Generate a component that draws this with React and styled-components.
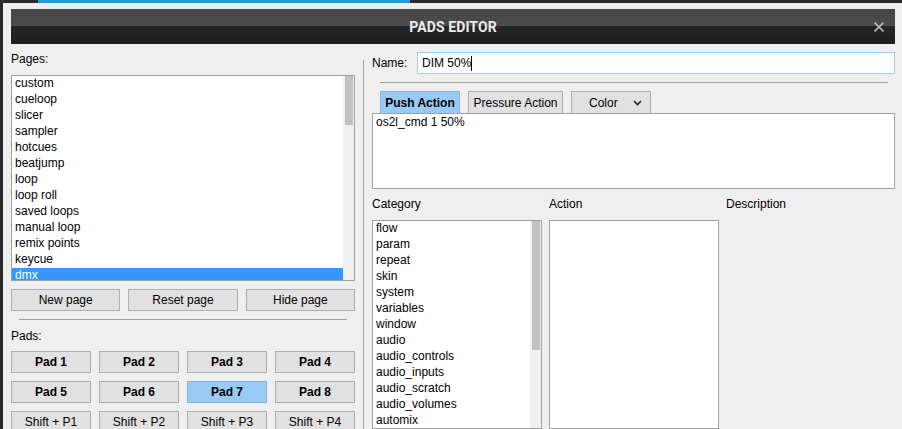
import styled, { createGlobalStyle } from 'styled-components';

const GlobalStyle = createGlobalStyle`
  html, body, #root {
    margin: 0;
    height: 100%;
  }
  body {
    background:
      linear-gradient(
          to right,
          transparent 38px,
          #1e9bd8 38px,
          #1e9bd8 410px,
          transparent 410px
        )
        top left / 100% 3px no-repeat,
      #2a2a2a;
    font-family: 'Liberation Sans', Arial, sans-serif;
    font-size: 12px;
    color: #000;
    overflow: hidden;
  }
  * {
    box-sizing: border-box;
  }
`;

const Page = styled.div`
  height: 100vh;
  padding: 3px 0 0 3px;
`;

const Dialog = styled.div`
  display: flex;
  flex-direction: column;
  height: 100%;
  padding: 6px 7px 0 8px;
  background: #efefef;
  overflow: hidden;
`;

const TitleBar = styled.div`
  display: grid;
  grid-template-columns: 1fr auto 1fr;
  align-items: center;
  height: 35px;
  flex-shrink: 0;
  background: linear-gradient(
    #474747 0,
    #4b4b4b 17px,
    #262626 17px,
    #1f1f1f 100%
  );
`;

const Title = styled.div`
  grid-column: 2;
  font-family: Roboto, 'Liberation Sans', sans-serif;
  font-weight: 700;
  font-size: 14px;
  color: #ececec;
  letter-spacing: 0.1px;
`;

const CloseButton = styled.div`
  justify-self: end;
  display: flex;
  margin-right: 11px;
  cursor: pointer;
`;

const Body = styled.div`
  flex: 1;
  min-height: 0;
  display: grid;
  grid-template-columns: 344px 1px 1fr;
  column-gap: 8px;
  padding-top: 8px;
`;

const Column = styled.div`
  display: flex;
  flex-direction: column;
  min-height: 0;
  > * {
    flex-shrink: 0;
  }
`;

const VRule = styled.div`
  margin-top: 8px;
  background: #a0a0a0;
`;

const HRule = styled.div`
  height: 1px;
  background: #a0a0a0;
  margin: ${(p) => p.$margin || '8px 8px 0'};
`;

const Label = styled.div`
  line-height: 15px;
  height: 15px;
  margin-top: ${(p) => p.$top || 0}px;
  white-space: nowrap;
`;

const ListBox = styled.div`
  display: flex;
  background: #fff;
  border: 1px solid #a0a0a0;
  overflow: hidden;
  margin-top: ${(p) => p.$top || 0}px;
  height: ${(p) => (p.$height ? `${p.$height}px` : 'auto')};
  min-height: 0;
`;

const ListItems = styled.div`
  flex: 1;
  min-width: 0;
  overflow: hidden;
`;

const ListRow = styled.div`
  height: 16px;
  line-height: 15px;
  padding-left: 3px;
  white-space: nowrap;
  background: ${(p) => (p.$selected ? '#3399ff' : 'transparent')};
  color: ${(p) => (p.$selected ? '#fff' : '#000')};
`;

const ScrollTrack = styled.div`
  width: 11px;
  flex-shrink: 0;
  padding-left: 2px;
  background: #f0f0f0;
`;

const ScrollThumb = styled.div`
  width: 8px;
  height: ${(p) => p.$height}px;
  background: #c1c1c4;
`;

const ButtonRow = styled.div`
  display: grid;
  grid-template-columns: repeat(3, 1fr);
  gap: 8px;
  margin-top: 8px;
`;

const Button = styled.div`
  height: 22px;
  display: flex;
  align-items: center;
  justify-content: center;
  background: ${(p) => (p.$active ? '#99c9f5' : '#e1e1e1')};
  border: 1px solid ${(p) => (p.$active ? '#7fb0de' : '#adadad')};
  font-weight: ${(p) => (p.$bold ? 700 : 400)};
  white-space: nowrap;
  cursor: pointer;
`;

const PadGrid = styled.div`
  display: grid;
  grid-template-columns: repeat(4, 80px);
  gap: 8px;
  margin-top: 7px;
`;

const NameRow = styled.div`
  display: flex;
  align-items: center;
  height: 22px;
`;

const NameLabel = styled.div`
  width: 45px;
`;

const NameField = styled.div`
  flex: 1;
  height: 22px;
  display: flex;
  align-items: center;
  padding-left: 4px;
  background: #fff;
  border: 1px solid #99d1ff;
`;

const Caret = styled.span`
  display: inline-block;
  width: 1px;
  height: 15px;
  background: #000;
`;

const Tabs = styled.div`
  display: flex;
  gap: 8px;
  margin-top: 8px;
  padding-left: 8px;
`;

const Tab = styled.div`
  width: ${(p) => p.$width}px;
  height: 22px;
  display: flex;
  align-items: center;
  justify-content: ${(p) => (p.$dropdown ? 'space-between' : 'center')};
  padding: ${(p) => (p.$dropdown ? '0 8px 0 17px' : '0')};
  background: ${(p) => (p.$active ? '#99c9f5' : '#e1e1e1')};
  border: 1px solid ${(p) => (p.$active ? '#88b6e0' : '#adadad')};
  border-bottom: none;
  font-weight: ${(p) => (p.$active ? 700 : 400)};
  white-space: nowrap;
  cursor: pointer;
`;

const ScriptBox = styled.div`
  height: 76px;
  padding: 1px 3px;
  line-height: 15px;
  background: #fff;
  border: 1px solid #a0a0a0;
`;

const ActionGrid = styled.div`
  flex: 1 1 auto !important;
  min-height: 0;
  display: grid;
  grid-template-columns: 170px 170px 1fr;
  grid-template-rows: 15px 1fr;
  column-gap: 7px;
  row-gap: 8px;
  margin-top: 8px;
`;

const pages = [
  'custom',
  'cueloop',
  'slicer',
  'sampler',
  'hotcues',
  'beatjump',
  'loop',
  'loop roll',
  'saved loops',
  'manual loop',
  'remix points',
  'keycue',
  'dmx',
];

const categories = [
  'flow',
  'param',
  'repeat',
  'skin',
  'system',
  'variables',
  'window',
  'audio',
  'audio_controls',
  'audio_inputs',
  'audio_scratch',
  'audio_volumes',
  'automix',
  'browser',
];

const pads = [
  { label: 'Pad 1', bold: true },
  { label: 'Pad 2', bold: true },
  { label: 'Pad 3', bold: true },
  { label: 'Pad 4', bold: true },
  { label: 'Pad 5', bold: true },
  { label: 'Pad 6', bold: true },
  { label: 'Pad 7', bold: true, active: true },
  { label: 'Pad 8', bold: true },
  { label: 'Shift + P1' },
  { label: 'Shift + P2' },
  { label: 'Shift + P3' },
  { label: 'Shift + P4' },
];

function CloseIcon() {
  return (
    <svg width="10" height="10" viewBox="0 0 10 10">
      <path
        d="M0.5 0.5L9.5 9.5M9.5 0.5L0.5 9.5"
        stroke="#b8b8b8"
        strokeWidth="1.6"
        fill="none"
      />
    </svg>
  );
}

function Chevron() {
  return (
    <svg width="9" height="6" viewBox="0 0 9 6">
      <path
        d="M1 1l3.5 3.5L8 1"
        stroke="#222"
        strokeWidth="1.6"
        fill="none"
      />
    </svg>
  );
}

export default function App() {
  return (
    <Page>
      <GlobalStyle />
      <Dialog>
        <TitleBar>
          <Title>PADS EDITOR</Title>
          <CloseButton>
            <CloseIcon />
          </CloseButton>
        </TitleBar>

        <Body>
          <Column>
            <Label>Pages:</Label>
            <ListBox $top={8} $height={206}>
              <ListItems>
                {pages.map((name) => (
                  <ListRow key={name} $selected={name === 'dmx'}>
                    {name}
                  </ListRow>
                ))}
              </ListItems>
              <ScrollTrack>
                <ScrollThumb $height={49} />
              </ScrollTrack>
            </ListBox>

            <ButtonRow>
              <Button>New page</Button>
              <Button>Reset page</Button>
              <Button>Hide page</Button>
            </ButtonRow>

            <HRule />

            <Label $top={9}>Pads:</Label>
            <PadGrid>
              {pads.map((pad) => (
                <Button key={pad.label} $bold={pad.bold} $active={pad.active}>
                  {pad.label}
                </Button>
              ))}
            </PadGrid>
          </Column>

          <VRule />

          <Column>
            <NameRow>
              <NameLabel>Name:</NameLabel>
              <NameField>
                DIM 50%
                <Caret />
              </NameField>
            </NameRow>

            <HRule $margin="8px 7px 0 8px" />

            <Tabs>
              <Tab $width={80} $active>
                Push Action
              </Tab>
              <Tab $width={95}>Pressure Action</Tab>
              <Tab $width={80} $dropdown>
                Color
                <Chevron />
              </Tab>
            </Tabs>
            <ScriptBox>os2l_cmd 1 50%</ScriptBox>

            <ActionGrid>
              <Label>Category</Label>
              <Label>Action</Label>
              <Label>Description</Label>
              <ListBox>
                <ListItems>
                  {categories.map((name) => (
                    <ListRow key={name}>{name}</ListRow>
                  ))}
                </ListItems>
                <ScrollTrack>
                  <ScrollThumb $height={129} />
                </ScrollTrack>
              </ListBox>
              <ListBox>
                <ListItems />
              </ListBox>
              <div />
            </ActionGrid>
          </Column>
        </Body>
      </Dialog>
    </Page>
  );
}
